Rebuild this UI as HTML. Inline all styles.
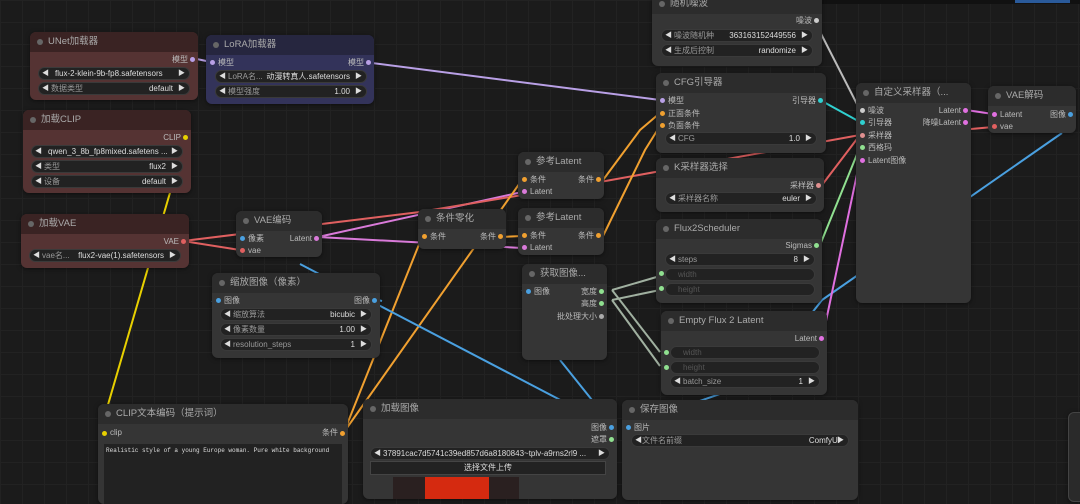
<!DOCTYPE html>
<html><head><meta charset="utf-8"><style>
*{box-sizing:border-box;margin:0;padding:0}
body{width:1080px;height:495px;overflow:hidden;background:#1b1b1b;font-family:"Liberation Sans","Noto Sans CJK SC",sans-serif;position:relative;
background-image:linear-gradient(#222 1px,transparent 1px),linear-gradient(90deg,#222 1px,transparent 1px);background-size:22px 22px}
.n{position:absolute;background:#353535;border-radius:6px;box-shadow:0 1px 4px rgba(0,0,0,.5);color:#bbb;font-size:8px}
.t{height:20px;background:#2c2c2c;border-radius:6px 6px 0 0;color:#aaa;font-size:9.5px;line-height:20px;padding-left:18px;position:relative;white-space:nowrap;overflow:hidden}
.t:before{content:"";position:absolute;left:7px;top:7px;width:6px;height:6px;border-radius:50%;background:#666}
.red{background:#553333}.red .t{background:#3a2323}
.blu{background:#33335a}.blu .t{background:#26263f}
.r{position:absolute;font-size:8px;color:#bbb;white-space:nowrap;line-height:10px}
.d{position:absolute;width:5px;height:5px;border-radius:50%}
.w{position:absolute;height:13px;background:#222;border:1px solid #3a3a3a;border-radius:7px;font-size:8px;line-height:11px;color:#999;padding:0 14px 0 12px;white-space:nowrap;overflow:hidden}
.w:before{content:"◀";position:absolute;left:3px;color:#ddd;font-size:7px}
.w:after{content:"▶";position:absolute;right:4px;top:0;color:#ddd;font-size:7px}
.w b{font-weight:normal;color:#ddd;position:absolute;right:16px}
.w.c b{position:static;margin-left:4px}
.w.g{color:#555}.w.g:before,.w.g:after{content:""}
</style></head><body>
<svg width="1080" height="495" style="position:absolute;left:0;top:0" fill="none" stroke-width="2">
<path d="M192 58 L211 62" stroke="#b9a0e6"/>
<path d="M372 63 L660 100" stroke="#b9a0e6"/>
<path d="M318 237 L522 192 M318 237 L522 248" stroke="#d97ad9"/>
<path d="M183 241 L240 250 M183 241 L420 212 L600 182 L860 135 M822 185 L860 135 M960 130 L993 127" stroke="#e06060"/>
<path d="M186 138 L100 432" stroke="#e8d000"/>
<path d="M344 432 L422 237 M344 432 L522 180 M500 237 L522 236 M603 180 L640 130 L660 113 M603 236 L645 150 L660 126" stroke="#f0a030"/>
<path d="M300 264 L612 427 M216 300 L212 302 M378 300 L382 301 M527 292 L522 290 M560 360 L600 410 M1062 133 L822 300 M822 300 L760 380 L625 427" stroke="#4aa0e0"/>
<path d="M612 290 L660 276 M612 300 L660 290 M612 290 L660 352 M612 300 L660 366" stroke="#a0b0a0"/>
<path d="M820 245 L860 147" stroke="#90e090"/>
<path d="M822 340 L860 160" stroke="#e070e0"/>
<path d="M820 100 L860 122" stroke="#30d0d0"/>
<path d="M815 22 L860 110" stroke="#bbb"/>
<path d="M966 110 L993 114" stroke="#e070e0"/>
</svg>
<div style="position:absolute;left:760px;top:0;width:320px;height:4px;background:#111"></div>
<div style="position:absolute;left:1015px;top:0;width:55px;height:3px;background:#2a5a9a"></div>

<div class="n red" style="left:30px;top:32px;width:168px;height:68px"><div class="t">UNet加载器</div>
<div class="r" style="right:10px;top:23px">模型</div><div class="d" style="right:3px;top:25px;background:#b9a0e6"></div>
<div class="w c" style="left:8px;top:35px;width:152px"><b>flux-2-klein-9b-fp8.safetensors</b></div>
<div class="w" style="left:8px;top:50px;width:152px">数据类型<b>default</b></div></div>

<div class="n blu" style="left:206px;top:35px;width:168px;height:69px"><div class="t">LoRA加载器</div>
<div class="d" style="left:4px;top:25px;background:#b9a0e6"></div><div class="r" style="left:12px;top:23px">模型</div>
<div class="r" style="right:10px;top:23px">模型</div><div class="d" style="right:3px;top:25px;background:#b9a0e6"></div>
<div class="w" style="left:9px;top:35px;width:152px">LoRA名...<b>动漫转真人.safetensors</b></div>
<div class="w" style="left:9px;top:50px;width:152px">模型强度<b>1.00</b></div></div>

<div class="n red" style="left:23px;top:110px;width:168px;height:83px"><div class="t">加载CLIP</div>
<div class="r" style="right:10px;top:23px">CLIP</div><div class="d" style="right:3px;top:25px;background:#e8d000"></div>
<div class="w c" style="left:8px;top:35px;width:152px"><b>qwen_3_8b_fp8mixed.safetens ...</b></div>
<div class="w" style="left:8px;top:50px;width:152px">类型<b>flux2</b></div>
<div class="w" style="left:8px;top:65px;width:152px">设备<b>default</b></div></div>

<div class="n red" style="left:21px;top:214px;width:168px;height:54px"><div class="t">加载VAE</div>
<div class="r" style="right:10px;top:23px">VAE</div><div class="d" style="right:3px;top:25px;background:#e06060"></div>
<div class="w" style="left:8px;top:35px;width:152px">vae名...<b>flux2-vae(1).safetensors</b></div></div>

<div class="n" style="left:236px;top:211px;width:86px;height:46px"><div class="t">VAE编码</div>
<div class="d" style="left:4px;top:25px;background:#4aa0e0"></div><div class="r" style="left:12px;top:23px">像素</div>
<div class="d" style="left:4px;top:37px;background:#e06060"></div><div class="r" style="left:12px;top:35px">vae</div>
<div class="r" style="right:10px;top:23px">Latent</div><div class="d" style="right:3px;top:25px;background:#d97ad9"></div></div>

<div class="n" style="left:212px;top:273px;width:168px;height:85px"><div class="t">缩放图像（像素）</div>
<div class="d" style="left:4px;top:25px;background:#4aa0e0"></div><div class="r" style="left:12px;top:23px">图像</div>
<div class="r" style="right:10px;top:23px">图像</div><div class="d" style="right:3px;top:25px;background:#4aa0e0"></div>
<div class="w" style="left:8px;top:35px;width:152px">缩放算法<b>bicubic</b></div>
<div class="w" style="left:8px;top:50px;width:152px">像素数量<b>1.00</b></div>
<div class="w" style="left:8px;top:65px;width:152px">resolution_steps<b>1</b></div></div>

<div class="n" style="left:418px;top:209px;width:88px;height:40px"><div class="t">条件零化</div>
<div class="d" style="left:4px;top:25px;background:#f0a030"></div><div class="r" style="left:12px;top:23px">条件</div>
<div class="r" style="right:10px;top:23px">条件</div><div class="d" style="right:3px;top:25px;background:#f0a030"></div></div>

<div class="n" style="left:518px;top:152px;width:86px;height:47px"><div class="t">参考Latent</div>
<div class="d" style="left:4px;top:25px;background:#f0a030"></div><div class="r" style="left:12px;top:23px">条件</div>
<div class="d" style="left:4px;top:37px;background:#d97ad9"></div><div class="r" style="left:12px;top:35px">Latent</div>
<div class="r" style="right:10px;top:23px">条件</div><div class="d" style="right:3px;top:25px;background:#f0a030"></div></div>

<div class="n" style="left:518px;top:208px;width:86px;height:47px"><div class="t">参考Latent</div>
<div class="d" style="left:4px;top:25px;background:#f0a030"></div><div class="r" style="left:12px;top:23px">条件</div>
<div class="d" style="left:4px;top:37px;background:#d97ad9"></div><div class="r" style="left:12px;top:35px">Latent</div>
<div class="r" style="right:10px;top:23px">条件</div><div class="d" style="right:3px;top:25px;background:#f0a030"></div></div>

<div class="n" style="left:522px;top:264px;width:85px;height:96px"><div class="t">获取图像...</div>
<div class="d" style="left:4px;top:25px;background:#4aa0e0"></div><div class="r" style="left:12px;top:23px">图像</div>
<div class="r" style="right:10px;top:23px">宽度</div><div class="d" style="right:3px;top:25px;background:#90e090"></div>
<div class="r" style="right:10px;top:35px">高度</div><div class="d" style="right:3px;top:37px;background:#90e090"></div>
<div class="r" style="right:10px;top:48px">批处理大小</div><div class="d" style="right:3px;top:50px;background:#aaa"></div></div>

<div class="n" style="left:652px;top:-6px;width:170px;height:72px"><div class="t">随机噪波</div>
<div class="r" style="right:10px;top:22px">噪波</div><div class="d" style="right:3px;top:24px;background:#ccc"></div>
<div class="w" style="left:9px;top:35px;width:152px">噪波随机种<b>363163152449556</b></div>
<div class="w" style="left:9px;top:50px;width:152px">生成后控制<b>randomize</b></div></div>

<div class="n" style="left:656px;top:73px;width:170px;height:80px"><div class="t">CFG引导器</div>
<div class="d" style="left:4px;top:25px;background:#b9a0e6"></div><div class="r" style="left:12px;top:23px">模型</div>
<div class="d" style="left:4px;top:38px;background:#f0a030"></div><div class="r" style="left:12px;top:36px">正面条件</div>
<div class="d" style="left:4px;top:50px;background:#f0a030"></div><div class="r" style="left:12px;top:48px">负面条件</div>
<div class="r" style="right:10px;top:23px">引导器</div><div class="d" style="right:3px;top:25px;background:#30d0d0"></div>
<div class="w" style="left:9px;top:59px;width:152px">CFG<b>1.0</b></div></div>

<div class="n" style="left:656px;top:158px;width:168px;height:54px"><div class="t">K采样器选择</div>
<div class="r" style="right:10px;top:23px">采样器</div><div class="d" style="right:3px;top:25px;background:#e09090"></div>
<div class="w" style="left:9px;top:34px;width:152px">采样器名称<b>euler</b></div></div>

<div class="n" style="left:656px;top:219px;width:166px;height:84px"><div class="t">Flux2Scheduler</div>
<div class="r" style="right:10px;top:22px">Sigmas</div><div class="d" style="right:3px;top:24px;background:#90e090"></div>
<div class="w" style="left:9px;top:34px;width:150px">steps<b>8</b></div>
<div class="d" style="left:3px;top:52px;background:#90e090"></div><div class="w g" style="left:9px;top:49px;width:150px">width</div>
<div class="d" style="left:3px;top:67px;background:#90e090"></div><div class="w g" style="left:9px;top:64px;width:150px">height</div></div>

<div class="n" style="left:661px;top:311px;width:166px;height:84px"><div class="t">Empty Flux 2 Latent</div>
<div class="r" style="right:10px;top:23px">Latent</div><div class="d" style="right:3px;top:25px;background:#e070e0"></div>
<div class="d" style="left:3px;top:39px;background:#90e090"></div><div class="w g" style="left:9px;top:35px;width:150px">width</div>
<div class="d" style="left:3px;top:54px;background:#90e090"></div><div class="w g" style="left:9px;top:50px;width:150px">height</div>
<div class="w" style="left:9px;top:64px;width:150px">batch_size<b>1</b></div></div>

<div class="n" style="left:856px;top:83px;width:115px;height:220px"><div class="t">自定义采样器（...</div>
<div class="d" style="left:4px;top:25px;background:#ccc"></div><div class="r" style="left:12px;top:23px">噪波</div>
<div class="d" style="left:4px;top:37px;background:#30d0d0"></div><div class="r" style="left:12px;top:35px">引导器</div>
<div class="d" style="left:4px;top:50px;background:#e09090"></div><div class="r" style="left:12px;top:48px">采样器</div>
<div class="d" style="left:4px;top:62px;background:#90e090"></div><div class="r" style="left:12px;top:60px">西格玛</div>
<div class="d" style="left:4px;top:75px;background:#e070e0"></div><div class="r" style="left:12px;top:73px">Latent图像</div>
<div class="r" style="right:10px;top:23px">Latent</div><div class="d" style="right:3px;top:25px;background:#e070e0"></div>
<div class="r" style="right:10px;top:35px">降噪Latent</div><div class="d" style="right:3px;top:37px;background:#e070e0"></div></div>

<div class="n" style="left:988px;top:86px;width:88px;height:47px"><div class="t">VAE解码</div>
<div class="d" style="left:4px;top:26px;background:#e070e0"></div><div class="r" style="left:12px;top:24px">Latent</div>
<div class="d" style="left:4px;top:38px;background:#e06060"></div><div class="r" style="left:12px;top:36px">vae</div>
<div class="r" style="right:10px;top:24px">图像</div><div class="d" style="right:3px;top:26px;background:#4aa0e0"></div></div>

<div class="n" style="left:98px;top:404px;width:250px;height:100px"><div class="t">CLIP文本编码（提示词）</div>
<div class="d" style="left:4px;top:27px;background:#e8d000"></div><div class="r" style="left:12px;top:24px">clip</div>
<div class="r" style="right:10px;top:24px">条件</div><div class="d" style="right:3px;top:27px;background:#f0a030"></div>
<div style="position:absolute;left:6px;top:40px;width:238px;height:60px;background:#222;font-family:'Liberation Mono',monospace;font-size:6px;color:#ddd;padding:3px 2px">Realistic style of a young Europe woman. Pure white background</div></div>

<div class="n" style="left:363px;top:399px;width:254px;height:100px"><div class="t">加载图像</div>
<div class="r" style="right:10px;top:24px">图像</div><div class="d" style="right:3px;top:26px;background:#4aa0e0"></div>
<div class="r" style="right:10px;top:36px">遮罩</div><div class="d" style="right:3px;top:38px;background:#90e090"></div>
<div class="w" style="left:7px;top:48px;width:240px;color:#ddd">37891cac7d5741c39ed857d6a8180843~tplv-a9rns2rl9 ...</div>
<div style="position:absolute;left:7px;top:62px;width:236px;height:14px;background:#222;border:1px solid #444;color:#ddd;font-size:8px;text-align:center;line-height:12px">选择文件上传</div>
<div style="position:absolute;left:30px;top:78px;width:126px;height:22px;background:#2a2020"></div>
<div style="position:absolute;left:62px;top:78px;width:64px;height:22px;background:#d52a10"></div></div>

<div class="n" style="left:622px;top:400px;width:236px;height:100px"><div class="t">保存图像</div>
<div class="d" style="left:4px;top:25px;background:#4aa0e0"></div><div class="r" style="left:12px;top:23px">图片</div>
<div class="w" style="left:9px;top:34px;width:218px;padding-left:10px">文件名前缀<b style="right:8px">ComfyUI</b></div></div>

<div class="n" style="left:1068px;top:412px;width:20px;height:90px;background:#2a2a2a;border:1px solid #444"></div>
</body></html>
